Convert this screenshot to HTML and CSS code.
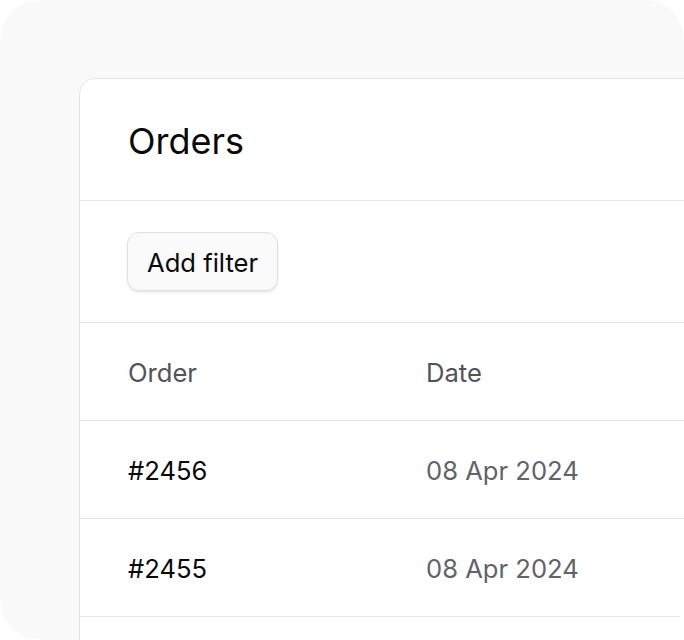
FILE: index.html
```html
<!DOCTYPE html>
<html lang="en">
<head>
    <meta charset="UTF-8">
    <meta name="viewport" content="width=device-width, initial-scale=1.0">
    <title>Orders</title>
    <link rel="stylesheet" href="styles.css">
</head>
<body>
    <div class="frame">
        <div class="card">
            <div class="card-header">
                <h1>Orders</h1>
            </div>
            <div class="toolbar">
                <button class="filter-btn">Add filter</button>
            </div>
            <div class="row head">
                <div class="cell">Order</div>
                <div class="cell">Date</div>
            </div>
            <div class="row">
                <div class="cell id">#2456</div>
                <div class="cell date">08 Apr 2024</div>
            </div>
            <div class="row">
                <div class="cell id">#2455</div>
                <div class="cell date">08 Apr 2024</div>
            </div>
            <div class="row"></div>
        </div>
    </div>
</body>
</html>
```

FILE: styles.css
```css
body {
    margin: 0;
    background-color: #ffffff;
    font-family: Inter, "Noto Sans", sans-serif;
}
.frame {
    width: 684px;
    height: 640px;
    box-sizing: border-box;
    padding: 78px 0 0 79px;
    background-color: #f9f9f9;
    border-radius: 40px;
    overflow: hidden;
}
.card {
    width: 700px;
    height: 700px;
    background-color: #ffffff;
    border: 1px solid #e4e4e4;
    border-radius: 16px 0 0 0;
}
.card-header {
    height: 121px;
    display: flex;
    align-items: center;
    padding-left: 48px;
    border-bottom: 1px solid #e4e4e4;
}
h1 {
    margin: 0;
    font-size: 36px;
    font-weight: 400;
    color: #09090b;
    padding-top: 2px;
}
.toolbar {
    height: 121px;
    display: flex;
    align-items: center;
    padding-left: 47px;
    border-bottom: 1px solid #e4e4e4;
}
.filter-btn {
    height: 59px;
    padding: 2px 19px 0;
    font-family: inherit;
    font-size: 25.6px;
    color: #09090b;
    background-color: #fafafa;
    border: 1px solid #e0e0e0;
    border-radius: 12px;
    box-shadow: 0 2px 2px rgba(0, 0, 0, 0.08);
}
.row {
    height: 97px;
    box-sizing: content-box;
    display: flex;
    align-items: center;
    padding: 0 0 0 48px;
    border-bottom: 1px solid #e4e4e4;
    font-size: 25.6px;
}
.cell {
    width: 298px;
    padding-top: 2px;
}
.head .cell {
    color: #52525b;
}
.id {
    color: #09090b;
}
.date {
    color: #626269;
}
```
